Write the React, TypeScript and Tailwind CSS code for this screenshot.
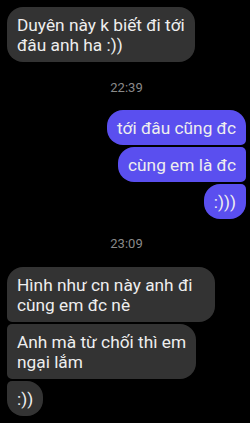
import React from 'react';

type Msg = { lines: string[]; className: string };

const incoming: Msg[] = [
  { lines: ['Hình như cn này anh đi', 'cùng em đc nè'], className: 'w-[208px] rounded-tl-[16px] rounded-bl-[5px]' },
  { lines: ['Anh mà từ chối thì em', 'ngại lắm'], className: 'rounded-tl-[5px] rounded-bl-[5px]' },
  { lines: [':))'], className: 'rounded-tl-[5px] rounded-bl-[16px]' },
];

const outgoing: Msg[] = [
  { lines: ['tới đâu cũng đc'], className: 'rounded-tr-[16px] rounded-br-[5px]' },
  { lines: ['cùng em là đc'], className: 'rounded-tr-[5px] rounded-br-[5px]' },
  { lines: [':)))'], className: 'rounded-tr-[5px] rounded-br-[16px]' },
];

const Bubble = ({ lines, className, out }: Msg & { out?: boolean }) => (
  <div
    className={`whitespace-nowrap px-[10px] pt-[8px] pb-[7px] text-[17.3px] leading-[20px] text-[#eeeeee] ${
      out ? 'bg-[#5a4fef] rounded-l-[16px] self-end' : 'bg-[#333333] rounded-r-[16px] self-start'
    } ${className}`}
  >
    {lines.map((l, i) => (
      <div key={i}>{l}</div>
    ))}
  </div>
);

const Time = ({ t }: { t: string }) => (
  <div className="text-center text-[13px] leading-[16px] text-[#8a8a8a]">{t}</div>
);

export default function App() {
  return (
    <div
      className="w-[250px] h-[423px] bg-black overflow-hidden flex flex-col pt-[7px] pl-[7px] pr-[4px]"
      style={{ fontFamily: 'Roboto, "Noto Sans", sans-serif' }}
    >
      <Bubble lines={['Duyên này k biết đi tới', 'đâu anh ha :))']} className="rounded-[16px]" />
      <div className="mt-[18px] mb-[14px]">
        <Time t="22:39" />
      </div>
      <div className="flex flex-col gap-[2px]">
        {outgoing.map((m, i) => (
          <Bubble key={i} {...m} out />
        ))}
      </div>
      <div className="mt-[17px] mb-[15px]">
        <Time t="23:09" />
      </div>
      <div className="flex flex-col gap-[2px]">
        {incoming.map((m, i) => (
          <Bubble key={i} {...m} />
        ))}
      </div>
    </div>
  );
}
